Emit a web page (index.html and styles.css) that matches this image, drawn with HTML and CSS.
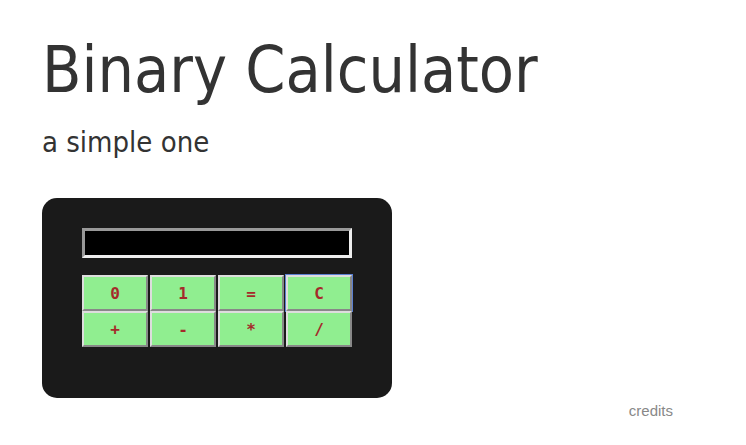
FILE: index.html
```html
<!DOCTYPE html>
<html>
<head>
<meta charset="utf-8">
<link rel="stylesheet" href="styles.css">
</head>
<body>
<div class="page">
  <h1 class="title">Binary Calculator</h1>
  <p class="subtitle">a simple one</p>
  <div class="calc">
    <div class="display"></div>
    <div class="keys">
      <button class="key">0</button>
      <button class="key">1</button>
      <button class="key">=</button>
      <button class="key key-focus">C</button>
      <button class="key">+</button>
      <button class="key">-</button>
      <button class="key">*</button>
      <button class="key">/</button>
    </div>
  </div>
  <div class="footer"><span class="credits">credits</span></div>
</div>
</body>
</html>
```
FILE: styles.css
```css
html, body {
  margin: 0;
  padding: 0;
  background: #fff;
}
.page {
  padding: 0 0 0 42px;
  font-family: "DejaVu Sans", sans-serif;
  font-stretch: condensed;
  color: #333;
}
.title {
  margin: 0;
  padding-top: 32px;
  font-weight: normal;
  font-size: 64px;
  line-height: 76px;
  letter-spacing: 0;
}
.subtitle {
  margin: 17px 0 0 0;
  font-size: 29px;
  line-height: 34px;
}
.calc {
  margin-top: 39px;
  width: 350px;
  height: 200px;
  box-sizing: border-box;
  background: #1a1a1a;
  border-radius: 15px;
  padding: 30px 40px;
}
.display {
  width: 270px;
  height: 30px;
  box-sizing: border-box;
  background: #000;
  border: 3px solid;
  border-color: #999 #eee #eee #999;
}
.keys {
  margin-top: 17px;
  display: grid;
  grid-template-columns: repeat(4, 66px);
  column-gap: 2px;
  row-gap: 0;
}
.key {
  height: 36px;
  box-sizing: border-box;
  background: #90ee90;
  border: 2px solid;
  border-color: #ddd #888 #888 #ddd;
  color: #a52a2a;
  font-family: "DejaVu Sans Mono", monospace;
  font-stretch: normal;
  font-weight: bold;
  font-size: 16px;
  padding: 0;
}
.key-focus {
  outline: 1px solid #5b7fd0;
  outline-offset: 0;
}
.footer {
  width: 631px;
  text-align: right;
  margin-top: 3px;
}
.credits {
  font-family: "Liberation Sans", Arial, sans-serif;
  font-stretch: normal;
  font-size: 15px;
  color: #888;
}
```
